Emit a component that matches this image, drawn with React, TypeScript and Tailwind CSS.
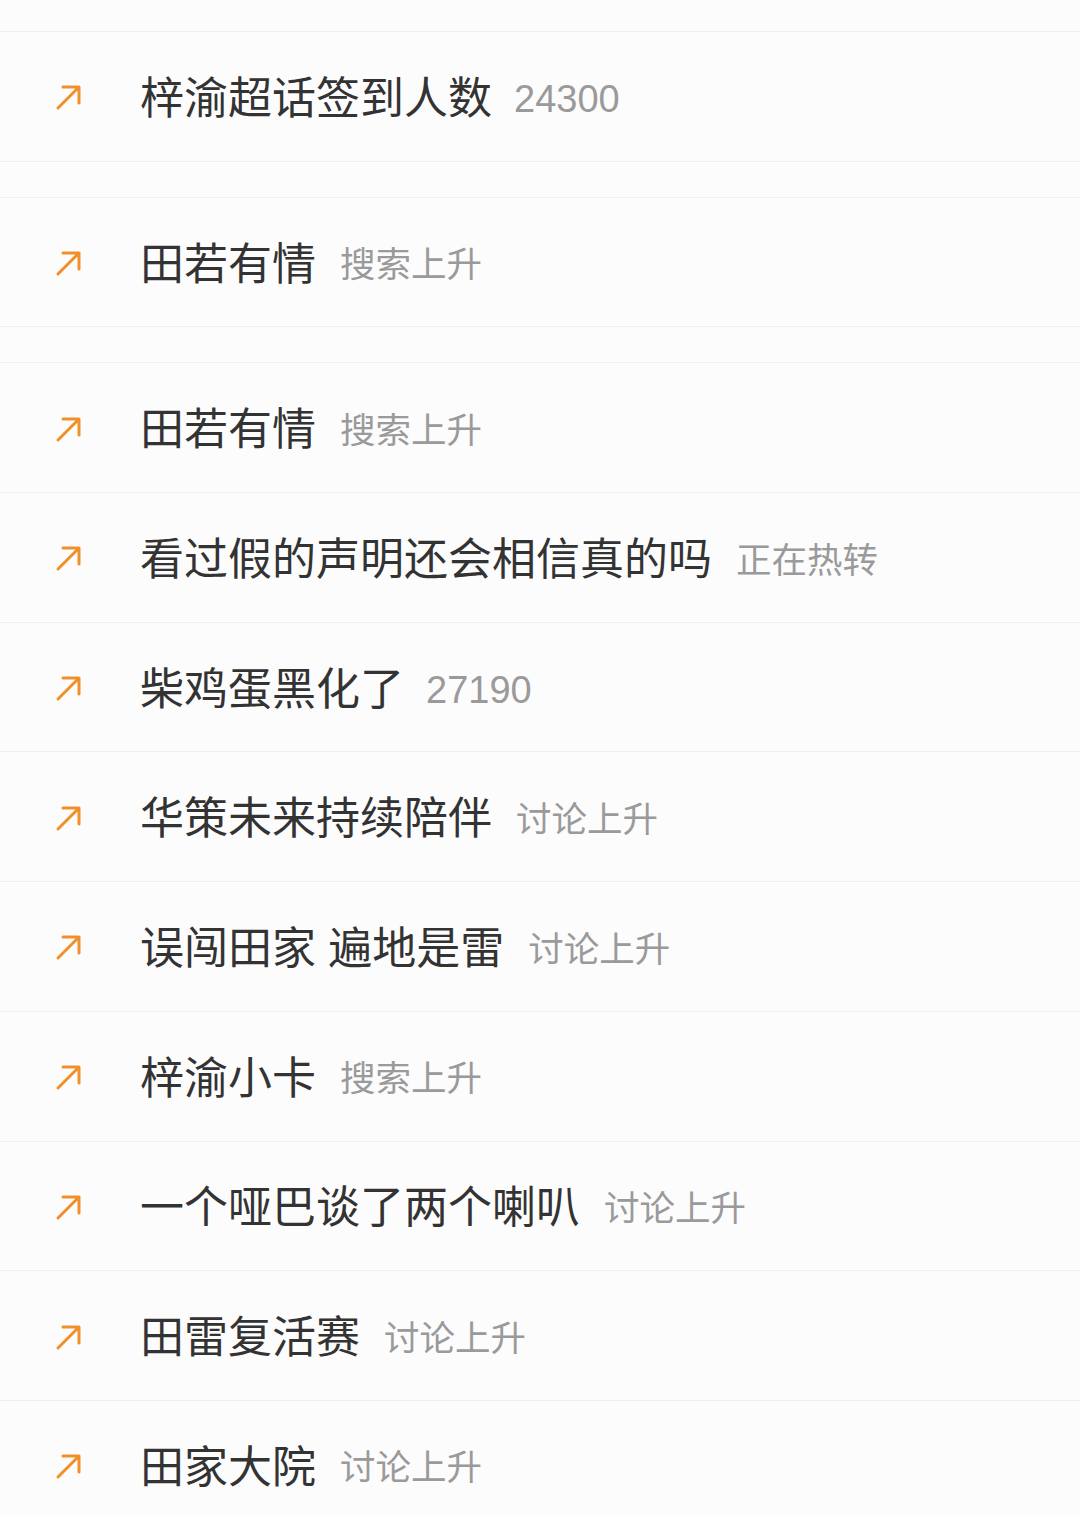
import React from "react";

type Item = { title: string; tag: string; gapBefore?: boolean };

const items: Item[] = [
  { title: "梓渝超话签到人数", tag: "24300" },
  { title: "田若有情", tag: "搜索上升", gapBefore: true },
  { title: "田若有情", tag: "搜索上升", gapBefore: true },
  { title: "看过假的声明还会相信真的吗", tag: "正在热转" },
  { title: "柴鸡蛋黑化了", tag: "27190" },
  { title: "华策未来持续陪伴", tag: "讨论上升" },
  { title: "误闯田家 遍地是雷", tag: "讨论上升" },
  { title: "梓渝小卡", tag: "搜索上升" },
  { title: "一个哑巴谈了两个喇叭", tag: "讨论上升" },
  { title: "田雷复活赛", tag: "讨论上升" },
  { title: "田家大院", tag: "讨论上升" },
];

const UpArrow = () => (
  <svg width="28" height="28" viewBox="0 0 28 28" fill="none">
    <path
      d="M3 25 L24 4 M8 4 H24 V20"
      stroke="#f0902a"
      strokeWidth="3"
      strokeLinecap="round"
      strokeLinejoin="round"
    />
  </svg>
);

const App = () => {
  return (
    <div
      className="w-[1080px] h-[1516px] overflow-hidden bg-[#fdfcfd]"
      style={{ fontFamily: '"Liberation Sans", "Noto Sans CJK SC", sans-serif' }}
    >
      <div className="h-[31px]" />
      {items.map((item, i) => {
        const numeric = /^\d+$/.test(item.tag);
        return (
          <React.Fragment key={i}>
            {item.gapBefore && <div className="h-[36px] border-t border-[#efeef0]" />}
            <div className="h-[129.7px] border-t border-[#efeef0] flex items-center">
              <div className="w-[140px] pl-[55px] pt-[2px] flex items-center">
                <UpArrow />
              </div>
              <span className="text-[44px] leading-none text-[#333333] pt-[5px]">
                {item.title}
              </span>
              <span
                className={
                  numeric
                    ? "ml-[22px] text-[38px] leading-none text-[#9a9a9a] pt-[6px]"
                    : "ml-[24px] text-[35.5px] leading-none text-[#9a9a9a] pt-[8px]"
                }
              >
                {item.tag}
              </span>
            </div>
          </React.Fragment>
        );
      })}
    </div>
  );
};

export default App;
